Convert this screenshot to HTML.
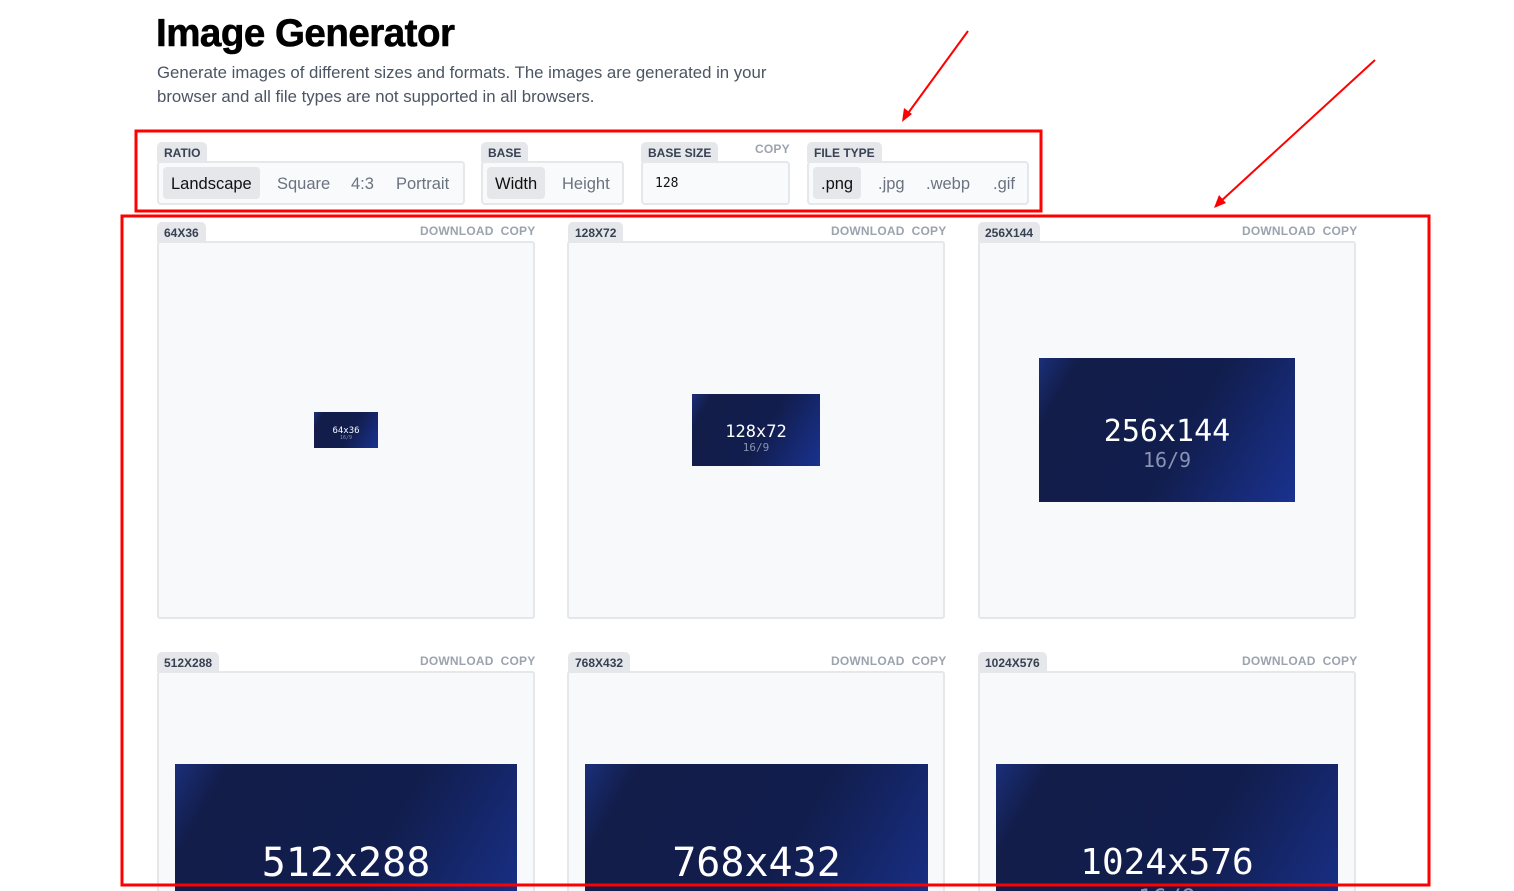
<!DOCTYPE html>
<html style="width:1514px;height:891px;overflow:hidden"><head><meta charset="utf-8"><style>
*{box-sizing:border-box;margin:0;padding:0}
body{width:1514px;height:891px;overflow:hidden;background:#fff;font-family:"Liberation Sans",Arial,sans-serif;position:relative}
.abs{position:absolute}
h1{position:absolute;left:156px;top:12px;font-size:38.5px;font-weight:bold;letter-spacing:-0.5px;color:#000;-webkit-text-stroke:0.6px #000}
.sub{position:absolute;left:157px;top:61px;width:650px;font-size:16.8px;line-height:24px;color:#4b5563}
.tab{position:absolute;background:#e5e7eb;border-radius:5px 5px 0 0;font-size:12px;font-weight:bold;color:#374151;padding:0 7px;height:20px;line-height:22px}
.grp{position:absolute;border:2px solid #e5e7eb;border-radius:4px;background:#f9fafb}
.opt{position:absolute;top:4px;height:32px;line-height:34px;font-size:16.5px;color:#6b7280;padding:0 8px;border-radius:4px}
.opt.on{background:#e5e7eb;color:#111}
.lnk{position:absolute;font-size:12px;font-weight:bold;color:#9ca3af;letter-spacing:.2px}
.card{position:absolute;width:378px;height:378px;border:2px solid #e5e7eb;border-radius:3px;background:#f8f9fb;overflow:hidden}
.card.b{height:220px;border-bottom:none;border-radius:3px 3px 0 0}
.img{position:absolute;background:linear-gradient(120deg,#1b2f7a 0%,#121d4a 12%,#111d4c 55%,#1a3290 100%);color:#fff;font-family:"DejaVu Sans Mono",monospace;text-align:center}
.img .s{color:#8a93b3}
</style></head><body>
<h1>Image Generator</h1>
<div class="sub">Generate images of different sizes and formats. The images are generated in your browser and all file types are not supported in all browsers.</div>

<div class="tab" style="left:157px;top:142px">RATIO</div>
<div class="grp" style="left:157px;top:161px;width:308px;height:44px">
<div class="opt on" style="left:4px">Landscape</div><div class="opt" style="left:110px">Square</div><div class="opt" style="left:184px">4:3</div><div class="opt" style="left:229px">Portrait</div></div>
<div class="tab" style="left:481px;top:142px">BASE</div>
<div class="grp" style="left:481px;top:161px;width:143px;height:44px">
<div class="opt on" style="left:4px">Width</div><div class="opt" style="left:71px">Height</div></div>
<div class="tab" style="left:641px;top:142px">BASE SIZE</div>
<div class="lnk" style="left:755px;top:142px">COPY</div>
<div class="grp" style="left:641px;top:161px;width:149px;height:44px"><div class="abs" style="left:12px;top:13px;font-size:13px;font-family:'DejaVu Sans Mono',monospace;color:#111">128</div></div>
<div class="tab" style="left:807px;top:142px">FILE TYPE</div>
<div class="grp" style="left:807px;top:161px;width:222px;height:44px">
<div class="opt on" style="left:4px">.png</div><div class="opt" style="left:61px">.jpg</div><div class="opt" style="left:109px">.webp</div><div class="opt" style="left:176px">.gif</div></div>

<div class="tab" style="left:157px;top:222px">64X36</div><div class="lnk" style="left:420px;top:224px">DOWNLOAD&nbsp; COPY</div>
<div class="card" style="left:157px;top:241px"><div class="img" style="left:155px;top:169px;width:64px;height:36px"><div style="font-size:9px;padding-top:14px;line-height:10px">64x36</div><div class="s" style="font-size:5px;line-height:5px">16/9</div></div></div>
<div class="tab" style="left:568px;top:222px">128X72</div><div class="lnk" style="left:831px;top:224px">DOWNLOAD&nbsp; COPY</div>
<div class="card" style="left:567px;top:241px"><div class="img" style="left:123px;top:151px;width:128px;height:72px"><div style="font-size:17px;padding-top:28px;line-height:20px">128x72</div><div class="s" style="font-size:11px;line-height:12px">16/9</div></div></div>
<div class="tab" style="left:978px;top:222px">256X144</div><div class="lnk" style="left:1242px;top:224px">DOWNLOAD&nbsp; COPY</div>
<div class="card" style="left:978px;top:241px"><div class="img" style="left:59px;top:115px;width:256px;height:144px"><div style="font-size:30px;padding-top:57px;line-height:34px">256x144</div><div class="s" style="font-size:20px;line-height:22px">16/9</div></div></div>

<div class="tab" style="left:157px;top:652px">512X288</div><div class="lnk" style="left:420px;top:654px">DOWNLOAD&nbsp; COPY</div>
<div class="card b" style="left:157px;top:671px"><div class="img" style="left:16px;top:91px;width:342px;height:192px"><div style="font-size:40px;padding-top:76px;line-height:46px">512x288</div></div></div>
<div class="tab" style="left:568px;top:652px">768X432</div><div class="lnk" style="left:831px;top:654px">DOWNLOAD&nbsp; COPY</div>
<div class="card b" style="left:567px;top:671px"><div class="img" style="left:16px;top:91px;width:343px;height:192px"><div style="font-size:40px;padding-top:76px;line-height:46px">768x432</div></div></div>
<div class="tab" style="left:978px;top:652px">1024X576</div><div class="lnk" style="left:1242px;top:654px">DOWNLOAD&nbsp; COPY</div>
<div class="card b" style="left:978px;top:671px"><div class="img" style="left:16px;top:91px;width:342px;height:192px"><div style="font-size:36px;padding-top:78px;line-height:42px">1024x576</div><div class="s" style="font-size:24px">16/9</div></div></div>

<svg class="abs" style="left:0;top:0" width="1514" height="891">
<g fill="none" stroke="#f00" stroke-width="3">
<rect x="136" y="131" width="905" height="80"/>
<rect x="122" y="216" width="1307" height="669"/>
<line x1="968" y1="31" x2="906" y2="116" stroke-width="2"/>
<line x1="1375" y1="60" x2="1220" y2="202" stroke-width="2"/>
</g>
<polygon points="902,122 904,108 912,114" fill="#f00"/>
<polygon points="1214,208 1219,195 1226,203" fill="#f00"/>
</svg>
</body></html>
